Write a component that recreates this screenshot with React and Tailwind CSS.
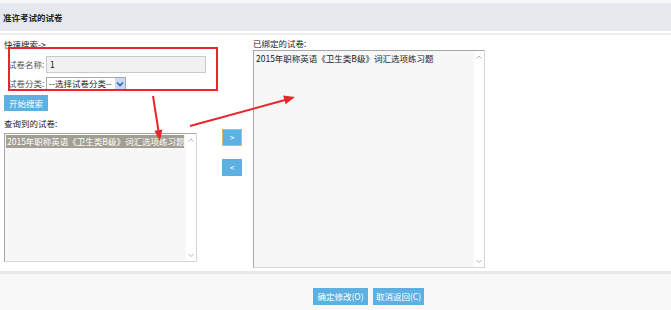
import React from "react";

const item = "2015年职称英语《卫生类B级》词汇选项练习题";

function ScrollStrip() {
  return (
    <div className="flex w-[10px] flex-col justify-between bg-white py-[1px]">
      <svg width="10" height="10" viewBox="0 0 10 10">
        <path d="M2.5 6.5 L5 4 L7.5 6.5" fill="none" stroke="#b5b5b5" strokeWidth="1" />
      </svg>
      <svg width="10" height="10" viewBox="0 0 10 10">
        <path d="M2.5 4 L5 6.5 L7.5 4" fill="none" stroke="#b5b5b5" strokeWidth="1" />
      </svg>
    </div>
  );
}

export default function App() {
  return (
    <div className="relative h-[310px] w-[671px] overflow-hidden bg-white font-['Noto_Sans_CJK_SC',sans-serif] text-[8.5px] text-[#333]">
      <div className="h-[3px] bg-[#f6f7f8]" />
      {/* header */}
      <div className="flex h-[28px] items-center bg-[#e5e9ed] pl-[3px] font-bold text-[#222]">
        准许考试的试卷
      </div>
      <div className="h-[2px] bg-white" />
      <div className="h-[2px] bg-[#eceef0]" />

      {/* body */}
      <div className="flex h-[236px]">
        {/* left */}
        <div className="ml-[4px] w-[193px] shrink-0">
          <div className="mt-[4px] h-[10px] leading-[10px] text-[#222]">快速搜索-&gt;</div>
          <div className="mt-[7px] flex h-[17px] items-center pl-[4px]">
            <span className="w-[38px] shrink-0 whitespace-nowrap text-[#555]">试卷名称:</span>
            <div className="flex h-[17px] w-[160px] shrink-0 items-center border border-[#c9c9c9] bg-[#f1f1f1] pl-[3px] text-[#111]">
              1
            </div>
          </div>
          <div className="mt-[4px] flex h-[13px] items-center pl-[4px]">
            <span className="w-[38px] shrink-0 whitespace-nowrap text-[#555]">试卷分类:</span>
            <div className="flex h-[14px] w-[80px] shrink-0 items-center border border-[#a9a9a9] bg-white">
              <span className="flex-1 whitespace-nowrap pl-[2px] text-[#222]">--选择试卷分类--</span>
              <div className="flex h-[12px] w-[10px] items-center justify-center bg-[#c7d9f3]">
                <svg width="8" height="6" viewBox="0 0 8 6">
                  <path d="M1 1.5 L4 4.5 L7 1.5" fill="none" stroke="#3463b6" strokeWidth="1.6" />
                </svg>
              </div>
            </div>
          </div>
          <button className="mt-[5px] flex h-[16px] w-[44px] items-center justify-center bg-[#5cb1e2] text-white">
            开始搜索
          </button>
          <div className="mt-[7px] h-[10px] leading-[10px] text-[#222]">查询到的试卷:</div>
          <div className="mt-[5px] flex h-[129px] w-[193px] border border-[#a8a8a8] border-b-[#d6d6d6] border-r-[#d6d6d6] bg-[#f7f7f7]">
            <div className="flex-1 pl-[1px] pt-[1px]">
              <div className="flex h-[13px] w-[178px] items-center whitespace-nowrap bg-[#a29e94] pl-[1px] text-white">
                {item}
              </div>
            </div>
            <ScrollStrip />
          </div>
        </div>

        {/* middle buttons */}
        <div className="ml-[25px] w-[20px] shrink-0 pt-[94px]">
          <button className="flex h-[17px] w-[20px] items-center justify-center border border-[#d8b870] bg-[#5cb1e2] text-white">
            &gt;
          </button>
          <button className="mt-[13px] flex h-[17px] w-[20px] items-center justify-center bg-[#5cb1e2] text-white">
            &lt;
          </button>
        </div>

        {/* right */}
        <div className="ml-[11px] w-[232px] shrink-0">
          <div className="mt-[3px] h-[10px] leading-[10px] text-[#222]">已绑定的试卷:</div>
          <div className="mt-[2px] flex h-[218px] w-[232px] border border-[#a8a8a8] border-b-[#d6d6d6] border-r-[#d6d6d6] bg-[#f7f7f7]">
            <div className="flex-1 pl-[2px] pt-[1px]">
              <div className="flex h-[13px] items-center whitespace-nowrap text-[#222]">{item}</div>
            </div>
            <ScrollStrip />
          </div>
        </div>
      </div>

      {/* footer */}
      <div className="h-[3px] bg-[#e9e9e9]" />
      <div className="flex h-[36px] items-start gap-[5px] bg-[#f8f8f8] pl-[313px] pt-[14px]">
        <button className="flex h-[17px] w-[55px] items-center justify-center bg-[#5cb1e2] text-white">
          确定修改(O)
        </button>
        <button className="flex h-[17px] w-[51px] items-center justify-center bg-[#5cb1e2] text-white">
          取消返回(C)
        </button>
      </div>

      {/* annotations */}
      <div className="absolute left-[8px] top-[47px] h-[44px] w-[210px] border-2 border-[#e8262c]" />
      <svg className="pointer-events-none absolute left-0 top-0" width="671" height="310" viewBox="0 0 671 310">
        <path d="M153 96 L158.5 131" stroke="#e8262c" strokeWidth="2" fill="none" />
        <polygon points="160,141 162.3,129.5 154.4,130.7" fill="#e8262c" />
        <path d="M190 126 L285 100" stroke="#e8262c" strokeWidth="2" fill="none" />
        <polygon points="295,97 285.6,104.3 283.2,95.6" fill="#e8262c" />
      </svg>
    </div>
  );
}
